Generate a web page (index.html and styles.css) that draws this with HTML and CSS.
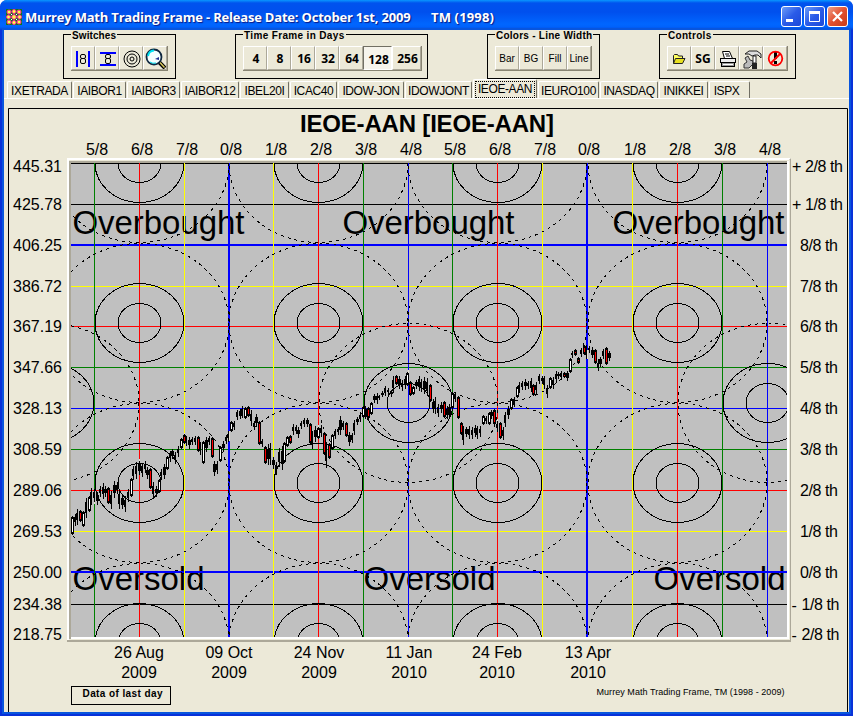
FILE: index.html
```html
<!DOCTYPE html>
<html lang="en">
<head>
    <meta charset="UTF-8">
    <meta name="viewport" content="width=device-width, initial-scale=1.0">
    <title>Murrey Math Trading Frame</title>
    <link rel="stylesheet" href="styles.css">
</head>
<body>
<div class="window">
    <div class="titlebar">
        <svg class="app-icon" width="16" height="16" viewBox="0 0 16 16">
            <rect width="16" height="16" fill="#0a7a1e"/>
            <g fill="#ffff40" stroke="#ff20a0" stroke-width="1">
                <circle cx="3" cy="3" r="2"/><circle cx="8" cy="2.5" r="2"/><circle cx="13" cy="3" r="2"/>
                <circle cx="2.5" cy="8" r="2"/><circle cx="8" cy="8" r="2.3"/><circle cx="13.5" cy="8" r="2"/>
                <circle cx="3" cy="13" r="2"/><circle cx="8" cy="13.5" r="2"/><circle cx="13" cy="13" r="2"/>
            </g>
            <path d="M5 5h1v1h-1zM10 5h1v1h-1zM5 10h1v1h-1zM10 10h1v1h-1z" fill="#fff"/>
        </svg>
        <span class="title">Murrey Math Trading Frame - Release Date: October 1st, 2009</span>
        <span class="title tm">TM (1998)</span>
        <div class="win-buttons">
            <span class="win-btn"><svg width="19" height="19"><rect x="4" y="12" width="7" height="3" fill="#fff"/></svg></span>
            <span class="win-btn"><svg width="19" height="19"><path d="M4.500 5v9.500h10v-9.500" fill="none" stroke="#fff"/><rect x="4" y="4" width="11" height="3" fill="#fff"/></svg></span>
            <span class="win-btn close"><svg width="19" height="19"><path d="M5 5l9 9M14 5l-9 9" stroke="#fff" stroke-width="2.2"/></svg></span>
        </div>
    </div>

    <div class="content">
        <div class="toolbar">
            <div class="group switches">
                <span class="legend">Switches</span>
                <div class="buttons">
                    <button><svg width="22" height="22"><path d="M5 4v16M17 4v16" stroke="#00f" stroke-width="2"/><g fill="none" stroke="#000"><rect x="8.500" y="7.500" width="5" height="4" rx="1.500"/><rect x="8.500" y="11.500" width="5" height="5" rx="1.500"/></g></svg></button>
                    <button><svg width="22" height="22"><g fill="none" stroke="#000"><rect x="9.500" y="7.500" width="5" height="4" rx="1.500"/><rect x="9.500" y="11.500" width="5" height="5" rx="1.500"/></g><path d="M4 6h16M4 18h16" stroke="#00f" stroke-width="2"/></svg></button>
                    <button><svg width="22" height="22"><g fill="none" stroke="#000"><circle cx="12" cy="12" r="8"/><circle cx="12" cy="12" r="5"/><circle cx="12" cy="12" r="2"/></g></svg></button>
                    <button><svg width="22" height="22"><path d="M15 15l6 6" stroke="#000" stroke-width="4"/><path d="M15.500 15l5 5.500" stroke="#d8c860" stroke-width="1.500"/><circle cx="10" cy="10" r="7.500" fill="#f4ffff" stroke="#102840" stroke-width="1.800"/><path d="M4 9a6.500 6.500 0 0 1 6-5.500" fill="none" stroke="#00e0f0" stroke-width="2"/><path d="M6 15a7 7 0 0 0 6 1" fill="none" stroke="#00e0f0"/><path d="M11 12l4-2v3z" fill="#203090"/></svg></button>
                </div>
            </div>
            <div class="group days">
                <span class="legend">Time Frame in Days</span>
                <div class="buttons">
                    <button>4</button>
                    <button>8</button>
                    <button>16</button>
                    <button>32</button>
                    <button>64</button>
                    <button class="wide pressed">128</button>
                    <button class="wide">256</button>
                </div>
            </div>
            <div class="group colors">
                <span class="legend">Colors - Line Width</span>
                <div class="buttons">
                    <button>Bar</button>
                    <button>BG</button>
                    <button>Fill</button>
                    <button>Line</button>
                </div>
            </div>
            <div class="group controls">
                <span class="legend">Controls</span>
                <div class="buttons">
                    <button><svg width="22" height="22"><path d="M5.500 16.500v-8l1-1h3l1 1.500h4v3" fill="#ffff60" stroke="#222"/><path d="M5.500 16.500l2-5h9.500l-2.500 5z" fill="#e8e020" stroke="#222"/></svg></button>
                    <button class="sg">SG</button>
                    <button><svg width="22" height="22"><path d="M8.500 11.500l-2-7h7l3 7z" fill="#fff" stroke="#000"/><path d="M9 7h4M10 9h4" stroke="#000"/><rect x="4.500" y="11.500" width="15" height="4" fill="#eee" stroke="#000"/><rect x="5.500" y="15.500" width="13" height="4" fill="#999" stroke="#000"/><path d="M7 17.500h10" stroke="#fff"/></svg></button>
                    <button><svg width="22" height="22"><path d="M4 21v-4l3-2-2-4 3-2 2 4 3 1v3l-4 4z" fill="#bbb" stroke="#333"/><path d="M5 7l4-3h8l4 3v4l-3-3h-3l-3 1-3-2z" fill="#ddd" stroke="#222"/><path d="M13 9h3v7h-3z" fill="#fff" stroke="#222"/><path d="M12 16h5v6h-5z" fill="#222"/></svg></button>
                    <button><svg width="22" height="22"><path d="M10 5h3v7h-3zM10 14h3v3h-3z" fill="#000"/><circle cx="11.500" cy="11.500" r="6.800" fill="none" stroke="#f00" stroke-width="1.800"/><path d="M7 16l9-9" stroke="#f00" stroke-width="2"/></svg></button>
                </div>
            </div>
        </div>

        <div class="tabs">
            <span class="tab t64">IXETRADA</span>
            <span class="tab t52">IAIBOR1</span>
            <span class="tab t53">IAIBOR3</span>
            <span class="tab t58">IAIBOR12</span>
            <span class="tab t48">IBEL20I</span>
            <span class="tab t47">ICAC40</span>
            <span class="tab t65">IDOW-JON</span>
            <span class="tab t66">IDOWJONT</span>
            <span class="tab active"><span class="focus">IEOE-AAN</span></span>
            <span class="tab t60">IEURO100</span>
            <span class="tab t58">INASDAQ</span>
            <span class="tab t48">INIKKEI</span>
            <span class="tab t40">ISPX</span>
        </div>

        <div class="page">
            <svg id="chart" class="chart" width="840" height="604" viewBox="8 108 840 604">
                <defs>
                    <clipPath id="plot"><rect x="71" y="163" width="716" height="474"/></clipPath>
                </defs>
                <path class="frame" d="M8.500 712V108.500H847.500V712"/>
                <text class="heading" x="300" y="132" textLength="254">IEOE-AAN [IEOE-AAN]</text>

                <!-- bevel -->
                <rect x="67" y="158" width="724" height="484" fill="#fff"/>
                <path d="M67 642V640H789V160L791 158V642z" fill="#aca899"/>
                <rect x="69" y="160" width="721" height="480" fill="#ece9d8"/>
                <rect x="69" y="161" width="720" height="478" fill="#fff"/>
                <path d="M69 639V161H787V163H71V639z" fill="#aca899"/>
                <rect x="71" y="163" width="716" height="474" fill="#c0c0c0"/>

                <g class="zone">
                    <text x="72.500" y="234" textLength="172">Overbought</text>
                    <text x="342.500" y="234" textLength="172">Overbought</text>
                    <text x="612.500" y="234" textLength="172">Overbought</text>
                    <text x="72.500" y="589.500" textLength="132">Oversold</text>
                    <text x="363.500" y="589.500" textLength="132">Oversold</text>
                    <text x="653.500" y="589.500" textLength="132">Oversold</text>
                </g>

                <g id="grid" clip-path="url(#plot)" shape-rendering="crispEdges"></g>
                <g id="candles" clip-path="url(#plot)" shape-rendering="crispEdges"></g>
                <g id="labels" class="labels"></g>

                <rect class="frame" x="71.500" y="686.500" width="99" height="18"/>
                <text class="small bold" x="82.500" y="697" textLength="80">Data of last day</text>
                <text class="small" x="596.500" y="695" textLength="188">Murrey Math Trading Frame, TM (1998 - 2009)</text>
            </svg>
        </div>
    </div>
</div>
<script src="chart.js"></script>
</body>
</html>
```
FILE: styles.css
```css
body {
    margin: 0;
    background: #fff;
    font-family: "Liberation Sans", Arial, sans-serif;
    color: #000;
}
.window {
    width: 853px;
    height: 716px;
    box-sizing: border-box;
    overflow: hidden;
    background: #0831d9;
    border-radius: 7px 7px 0 0;
}
.titlebar {
    display: flex;
    align-items: center;
    height: 30px;
    padding: 3px 5px 0 6px;
    box-sizing: border-box;
    background: linear-gradient(#0997ff 0, #0053ee 3px, #0050ee 12px, #0066ff 24px, #0062fb 27px, #003dd7 30px);
}
.app-icon {
    margin-right: 3px;
}
.title {
    width: 406px;
    color: #fff;
    font: bold 13px "Open Sans", "Noto Sans", sans-serif;
    letter-spacing: -0.2px;
    text-shadow: 1px 1px 1px #0a1883;
    white-space: nowrap;
}
.tm {
    width: auto;
    letter-spacing: 0.15px;
}
.win-buttons {
    display: flex;
    gap: 2px;
    margin-left: auto;
}
.win-btn {
    width: 19px;
    height: 19px;
    border: 1px solid #fff;
    border-radius: 3px;
    background: linear-gradient(135deg, #6c9cf8, #2a5be8 50%, #1c48d8);
}
.win-btn svg {
    display: block;
}
.close {
    background: linear-gradient(135deg, #f0a088, #e25030 50%, #c83c18);
}
.content {
    height: 682px;
    margin: 0 4px;
    background: #ece9d8;
    box-shadow: 0 0 0 2px #0855dd;
}
.toolbar {
    display: flex;
    height: 49px;
    padding: 4px 0 0 59px;
    box-sizing: border-box;
}
.group {
    height: 45px;
    box-sizing: border-box;
    border: 1px solid #000;
    padding: 0 7px;
}
.switches {
    width: 113px;
    margin-right: 59px;
}
.days {
    width: 193px;
    margin-right: 59px;
}
.colors {
    width: 113px;
    margin-right: 59px;
}
.controls {
    width: 137px;
}
.legend {
    display: table;
    height: 11px;
    margin-top: -5px;
    background: #ece9d8;
    font: bold 10px/11px "Liberation Sans", Arial, sans-serif;
    letter-spacing: 0.1px;
    padding: 0 1px;
    white-space: nowrap;
}
.days .legend {
    letter-spacing: 0.35px;
}
.colors .legend {
    letter-spacing: 0.25px;
}
.controls .legend {
    letter-spacing: 0.3px;
}
.buttons {
    display: inline-flex;
    margin-top: 5px;
    border-right: 1px solid #888472;
    border-bottom: 1px solid #888472;
}
button {
    display: flex;
    align-items: center;
    justify-content: center;
    width: 24px;
    height: 24px;
    padding: 0;
    border: 1px solid;
    border-color: #fff #aca899 #aca899 #fff;
    background: #ece9d8;
    color: #000;
    font: 10px "Liberation Sans", Arial, sans-serif;
}
.days button {
    padding-left: 2px;
    font: bold 12px "Open Sans", "Noto Sans", sans-serif;
}
.days .wide {
    width: 29px;
}
.days .pressed {
    border-color: #716f64 #fff #fff #716f64;
    background: #f6f4ec;
    padding-top: 2px;
}
button.sg {
    font: bold 12px "Open Sans", "Noto Sans", sans-serif;
}
.tabs {
    display: flex;
    align-items: flex-end;
    height: 20px;
    padding-left: 3px;
    border-bottom: 1px solid #fff;
    box-sizing: border-box;
}
.tab {
    height: 17px;
    box-sizing: border-box;
    margin-right: 1px;
    border: 1px solid;
    border-color: #fff #716f64 transparent #fff;
    border-bottom: 0;
    border-radius: 2px 2px 0 0;
    font-size: 12px;
    line-height: 18px;
    letter-spacing: -0.4px;
    text-align: center;
    white-space: nowrap;
}
.t40 { width: 41px; padding-right: 6px; }
.t47 { width: 47px; }
.t48 { width: 49px; }
.t52 { width: 53px; }
.t53 { width: 53px; }
.t58 { width: 58px; }
.t60 { width: 61px; }
.t64 { width: 65px; }
.t65 { width: 66px; }
.t66 { width: 67px; }
.active {
    width: 64px;
    height: 19px;
    padding: 1px 1px 0;
}
.focus {
    display: block;
    height: 15px;
    border: 1px dotted #000;
    line-height: 14px;
}
.page {
    padding: 9px 0 0 4px;
}
.chart {
    display: block;
}
.frame {
    fill: none;
    stroke: #000;
}
.heading {
    font-size: 24px;
    font-weight: bold;
}
.zone {
    font-size: 33px;
}
.labels {
    font-size: 16px;
}
.small {
    font-size: 9px;
}
.bold {
    font-size: 10px;
    font-weight: bold;
}
```
FILE: chart.js
```javascript
const NS = 'http://www.w3.org/2000/svg';
const grid = document.getElementById('grid');
const candles = document.getElementById('candles');
const labels = document.getElementById('labels');

function add(parent, tag, attrs, text) {
    const el = document.createElementNS(NS, tag);
    for (const k in attrs) el.setAttribute(k, attrs[k]);
    if (text) el.textContent = text;
    parent.appendChild(el);
}

// vertical lines: x, octave, color
const vertical = [
    [94, '5/8', 'green'], [139, '6/8', 'red'], [184, '7/8', 'yellow'], [228, '0/8', 'blue'],
    [273, '1/8', 'yellow'], [318, '2/8', 'red'], [363, '3/8', 'green'], [408, '4/8', 'blue'],
    [452, '5/8', 'green'], [497, '6/8', 'red'], [542, '7/8', 'yellow'], [586, '0/8', 'blue'],
    [632, '1/8', 'yellow'], [677, '2/8', 'red'], [722, '3/8', 'green'], [767, '4/8', 'blue']
];

// horizontal lines: y, price, octave, color, label baseline
const horizontal = [
    [163, '445.31', '+ 2/8 th', 'black', 172], [204, '425.78', '+ 1/8 th', 'black', 210],
    [244, '406.25', '8/8 th', 'blue', 251], [286, '386.72', '7/8 th', 'yellow', 292],
    [326, '367.19', '6/8 th', 'red', 332], [367, '347.66', '5/8 th', 'green', 373],
    [408, '328.13', '4/8 th', 'blue', 414], [449, '308.59', '3/8 th', 'green', 455],
    [490, '289.06', '2/8 th', 'red', 496], [531, '269.53', '1/8 th', 'yellow', 537],
    [571, '250.00', '0/8 th', 'blue', 578], [604, '234.38', '- 1/8 th', 'black', 610],
    [637, '218.75', '- 2/8 th', 'black', 640]
];

// date labels under the plot
const dates = [
    [139, '26 Aug', '2009'], [229, '09 Oct', '2009'], [319, '24 Nov', '2009'],
    [409, '11 Jan', '2010'], [497, '24 Feb', '2010'], [588, '13 Apr', '2010']
];

for (const [y, price, octave, color, base] of horizontal) {
    const thick = octave === '8/8 th' || octave === '0/8 th';
    add(grid, 'rect', {x: 71, y: y, width: 716, height: thick ? 2 : 1, fill: color});
    add(labels, 'text', {x: 13, y: base, textLength: 49}, price);
    const sign = octave.includes(' th') && '+-'.includes(octave[0]) ? octave[0] : '';
    let start = 800;
    if (sign === '+') start = 805;
    if (sign === '-') start = 801.5;
    if (sign) {
        add(labels, 'text', {x: sign === '+' ? 792 : 791.5, y: base + (sign === '-' ? 1 : 0)}, sign);
    }
    add(labels, 'text', {x: start, y: base, textLength: 38}, sign ? octave.slice(2) : octave);
}
for (const [x, octave, color] of vertical) {
    add(grid, 'rect', {x: x, y: 163, width: octave === '0/8' ? 2 : 1, height: 474, fill: color});
    add(labels, 'text', {x: x + 3, y: 155, 'text-anchor': 'middle'}, octave);
}
for (const [x, day, year] of dates) {
    add(labels, 'text', {x: x, y: 658, 'text-anchor': 'middle'}, day);
    add(labels, 'text', {x: x, y: 678, 'text-anchor': 'middle'}, year);
}

function rings(cx, cy) {
    const base = {cx: cx, cy: cy, fill: 'none', stroke: '#000'};
    add(grid, 'ellipse', {...base, rx: 21.5, ry: 19.5});
    add(grid, 'ellipse', {...base, rx: 44.5, ry: 39.5});
    add(grid, 'ellipse', {...base, rx: 89.5, ry: 79.5, 'stroke-dasharray': '3 4'});
}
for (const cx of [139.5, 318.5, 497.5, 677.5]) {
    for (const cy of [163, 323, 483, 643]) rings(cx, cy);
}
for (const cx of [49.5, 408.5, 767.5]) rings(cx, 403);

// blank part of a vertical line next to the bars: x, top, bottom
const gaps = [
    [94, 500, 504], [139, 459, 475], [184, 433, 436], [228, 431, 441], [318, 425, 439],
    [408, 370, 385], [452, 392, 394], [497, 419, 432], [542, 374, 378], [586, 350, 359]
];
for (const [x, top, bottom] of gaps) {
    add(grid, 'rect', {x: x, y: top, width: x === 228 || x === 586 ? 2 : 1, height: bottom - top, fill: '#e4e0d0'});
}

// one bar per day: high, low, r = down body, w = up body
const bars = `517,533w 515,524 510,523 511,520r 512,525w 499,516 497,510w 489,503 490,500 493,503
487,495 484,497 487,495 488,502r 492,507 482,496 483,492 491,507 496,507 497,510
490,500 479,495w 467,478 463,477 462,473 464,475 462,471 468,477 469,487r 483,497
487,495 480,491w 470,478 465,477 457,468w 452,460 450,457 453,462 447,455 439,447w 435,442r
437,444 438,447 438,443 437,443 437,450r 443,453 442,462w 438,450 437,443 438,456r
462,474 462,472 447,460w 442,450 436,442 432,440 422,430w 422,428 411,418 410,417
407,416 408,417w 407,415r 411,424 422,428 415,425 422,443r 440,445 447,462r 445,463
444,463 458,467 463,473 449,465 447,468 443,461w
437,445w 436,442r 425,433 426,432 428,436 422,427 419,425 419,425 424,442r 432,447
427,440 428,437w 426,435 433,453r 443,466 444,457r 435,448w 430,437 428,433 417,433
422,428 423,435r 433,444 434,441 421,433 418,423 414,420 407,416w 407,417 408,417r
403,413w 395,401 394,402 396,398 392,395 387,394 389,393 391,395 377,391 376,383r
377,387 381,389 377,387 373,384w 382,394r 387,393w 381,387 377,389 380,390 378,392
379,394 385,400r 400,411 398,412 405,415 403,411 402,416r 407,417 405,417 393,407w
393,400 397,417r 423,433r 427,443 428,435 427,437 428,437 426,435 427,437
427,435 416,423w 417,422 413,423w 411,417 410,423r 422,430 423,437r 428,438 413,425
407,417 399,408w 398,405 387,396w 383,391 382,388 380,388 382,387 379,390 385,394r
383,392 375,382 377,382 377,387 386,396 378,387w 378,387 372,381 373,377 372,378
373,376r 372,379 359,371w 352,356 350,354r 358,362r 349,355 346,353r 346,357 347,351
349,356 350,362r 362,369 358,365 350,357 348,363r 352,359`.split(/\s+/);

bars.forEach((bar, i) => {
    const m = bar.match(/(\d+),(\d+)([rw]?)/);
    const x = Math.floor(72.3 + i * 2.797);
    const high = +m[1];
    const size = m[2] - high;
    add(candles, 'rect', {x: x, y: high - 1, width: 1, height: size + 3, fill: '#000'});
    if (m[3]) {
        add(candles, 'rect', {x: x - 1, y: high, width: 3, height: size + 1, fill: '#000'});
        add(candles, 'rect', {x: x, y: high + 2, width: 1, height: Math.max(size - 3, 1), fill: m[3] === 'r' ? 'red' : '#fff'});
    } else {
        const inset = Math.round(size * 0.2);
        add(candles, 'rect', {x: x - 1, y: high + inset, width: i % 3 ? 2 : 3, height: Math.max(size - 2 * inset, 2), fill: '#000'});
    }
});
```
